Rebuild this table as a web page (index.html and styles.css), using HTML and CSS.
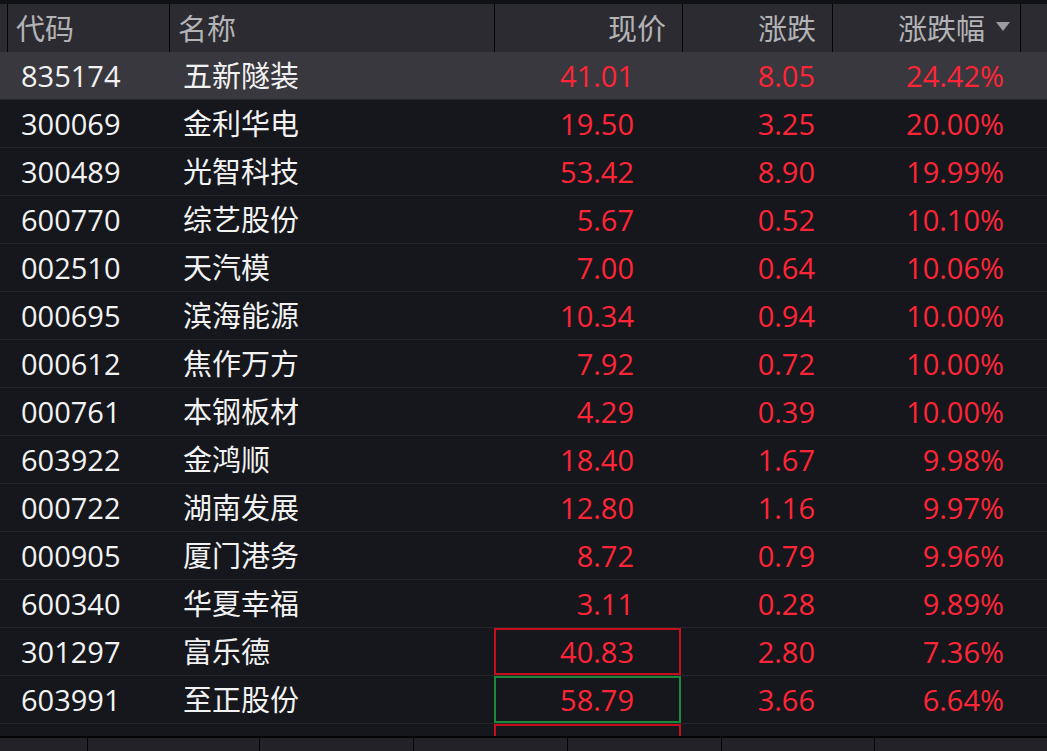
FILE: index.html
```html
<!DOCTYPE html>
<html lang="zh-CN">
<head>
<meta charset="utf-8">
<title>涨跌幅排行</title>
<link rel="stylesheet" href="styles.css">
</head>
<body>
<div class="screen">
  <div class="topband"></div>
  <div class="row head">
    <div class="c c0"></div>
    <div class="c c-code">代码</div>
    <div class="c c-name">名称</div>
    <div class="c c-price">现价</div>
    <div class="c c-chg">涨跌</div>
    <div class="c c-pct">涨跌幅<span class="sort"></span></div>
    <div class="c c-end"></div>
  </div>
  <div class="body">
    <div class="row sel"><div class="c c0"></div><div class="c c-code">835174</div><div class="c c-name">五新隧装</div><div class="c c-price up">41.01</div><div class="c c-chg up">8.05</div><div class="c c-pct up">24.42%</div><div class="c c-end"></div></div>
    <div class="row"><div class="c c0"></div><div class="c c-code">300069</div><div class="c c-name">金利华电</div><div class="c c-price up">19.50</div><div class="c c-chg up">3.25</div><div class="c c-pct up">20.00%</div><div class="c c-end"></div></div>
    <div class="row"><div class="c c0"></div><div class="c c-code">300489</div><div class="c c-name">光智科技</div><div class="c c-price up">53.42</div><div class="c c-chg up">8.90</div><div class="c c-pct up">19.99%</div><div class="c c-end"></div></div>
    <div class="row"><div class="c c0"></div><div class="c c-code">600770</div><div class="c c-name">综艺股份</div><div class="c c-price up">5.67</div><div class="c c-chg up">0.52</div><div class="c c-pct up">10.10%</div><div class="c c-end"></div></div>
    <div class="row"><div class="c c0"></div><div class="c c-code">002510</div><div class="c c-name">天汽模</div><div class="c c-price up">7.00</div><div class="c c-chg up">0.64</div><div class="c c-pct up">10.06%</div><div class="c c-end"></div></div>
    <div class="row"><div class="c c0"></div><div class="c c-code">000695</div><div class="c c-name">滨海能源</div><div class="c c-price up">10.34</div><div class="c c-chg up">0.94</div><div class="c c-pct up">10.00%</div><div class="c c-end"></div></div>
    <div class="row"><div class="c c0"></div><div class="c c-code">000612</div><div class="c c-name">焦作万方</div><div class="c c-price up">7.92</div><div class="c c-chg up">0.72</div><div class="c c-pct up">10.00%</div><div class="c c-end"></div></div>
    <div class="row"><div class="c c0"></div><div class="c c-code">000761</div><div class="c c-name">本钢板材</div><div class="c c-price up">4.29</div><div class="c c-chg up">0.39</div><div class="c c-pct up">10.00%</div><div class="c c-end"></div></div>
    <div class="row"><div class="c c0"></div><div class="c c-code">603922</div><div class="c c-name">金鸿顺</div><div class="c c-price up">18.40</div><div class="c c-chg up">1.67</div><div class="c c-pct up">9.98%</div><div class="c c-end"></div></div>
    <div class="row"><div class="c c0"></div><div class="c c-code">000722</div><div class="c c-name">湖南发展</div><div class="c c-price up">12.80</div><div class="c c-chg up">1.16</div><div class="c c-pct up">9.97%</div><div class="c c-end"></div></div>
    <div class="row"><div class="c c0"></div><div class="c c-code">000905</div><div class="c c-name">厦门港务</div><div class="c c-price up">8.72</div><div class="c c-chg up">0.79</div><div class="c c-pct up">9.96%</div><div class="c c-end"></div></div>
    <div class="row"><div class="c c0"></div><div class="c c-code">600340</div><div class="c c-name">华夏幸福</div><div class="c c-price up">3.11</div><div class="c c-chg up">0.28</div><div class="c c-pct up">9.89%</div><div class="c c-end"></div></div>
    <div class="row"><div class="c c0"></div><div class="c c-code">301297</div><div class="c c-name">富乐德</div><div class="c c-price up box-red">40.83</div><div class="c c-chg up">2.80</div><div class="c c-pct up">7.36%</div><div class="c c-end"></div></div>
    <div class="row"><div class="c c0"></div><div class="c c-code">603991</div><div class="c c-name">至正股份</div><div class="c c-price up box-green">58.79</div><div class="c c-chg up">3.66</div><div class="c c-pct up">6.64%</div><div class="c c-end"></div></div>
    <div class="row partial"><div class="c c0"></div><div class="c c-code">002229</div><div class="c c-name">鸿博股份</div><div class="c c-price up box-red">16.61</div><div class="c c-chg up">1.03</div><div class="c c-pct up">6.61%</div><div class="c c-end"></div></div>
  </div>
  <div class="divider"></div>
  <div class="bottombar">
    <div class="b">序号</div>
    <div class="b">代码</div>
    <div class="b">名称</div>
    <div class="b">现价</div>
    <div class="b">涨跌</div>
    <div class="b">涨跌幅</div>
    <div class="b">成交量</div>
  </div>
</div>
</body>
</html>
```
FILE: styles.css
```css
html, body {
  margin: 0;
  padding: 0;
  background: #15171c;
}

.screen {
  width: 1047px;
  height: 751px;
  display: flex;
  flex-direction: column;
  overflow: hidden;
  font-family: "Open Sans", "Noto Sans CJK SC", sans-serif;
  font-size: 29px;
  color: #f2f2f2;
}

.topband {
  height: 4px;
  background: #101114;
  flex: none;
}

.row {
  display: grid;
  grid-template-columns: 7px 162px 325px 188px 150px 188px 1fr;
  height: 47px;
  border-bottom: 1px solid #24262b;
  flex: none;
}

.c {
  display: flex;
  align-items: center;
  white-space: nowrap;
  box-sizing: border-box;
  line-height: 1;
}

.head {
  height: 48px;
  border-bottom: none;
  background: #2b2b31;
  color: #b3b3b6;
}

.head .c + .c {
  border-left: 1px solid #050505;
}

.head .c-code,
.head .c-name {
  padding-left: 8px;
}

.head .c-price,
.head .c-chg {
  justify-content: flex-end;
  padding-right: 16px;
}

.head .c-pct {
  justify-content: flex-end;
  padding-right: 10px;
}

.sort {
  width: 0;
  height: 0;
  margin-left: 11px;
  margin-top: -4px;
  border-left: 7px solid transparent;
  border-right: 7px solid transparent;
  border-top: 9px solid #9c9ca0;
}

.body {
  height: 684px;
  flex: none;
  overflow: hidden;
}

.sel {
  background: #38383e;
}

.body .c-code {
  padding-left: 14px;
}

.body .c-name {
  padding-left: 14px;
}

.body .c-price {
  justify-content: flex-end;
  padding-right: 48px;
}

.body .c-chg {
  justify-content: flex-end;
  padding-right: 17px;
}

.body .c-pct {
  justify-content: flex-end;
  padding-right: 16px;
}

.partial .c {
  padding-top: 5px;
}

.up {
  color: #ff2536;
}

.box-red {
  border: 2px solid #c50f1f;
  margin-right: 1px;
  padding-right: 45px !important;
}

.box-green {
  border: 2px solid #1a8a3a;
  margin-right: 1px;
  padding-right: 45px !important;
}

.divider {
  height: 2px;
  background: #050505;
  flex: none;
}

.bottombar {
  flex: none;
  height: 13px;
  overflow: hidden;
  display: grid;
  grid-template-columns: 87px 172px 154px 154px 154px 153px 1fr;
  background: #222228;
  color: #d8d8d8;
}

.b {
  height: 56px;
  display: flex;
  align-items: center;
  justify-content: center;
  line-height: 1;
  white-space: nowrap;
}

.b + .b {
  border-left: 1px solid #050505;
}
```
